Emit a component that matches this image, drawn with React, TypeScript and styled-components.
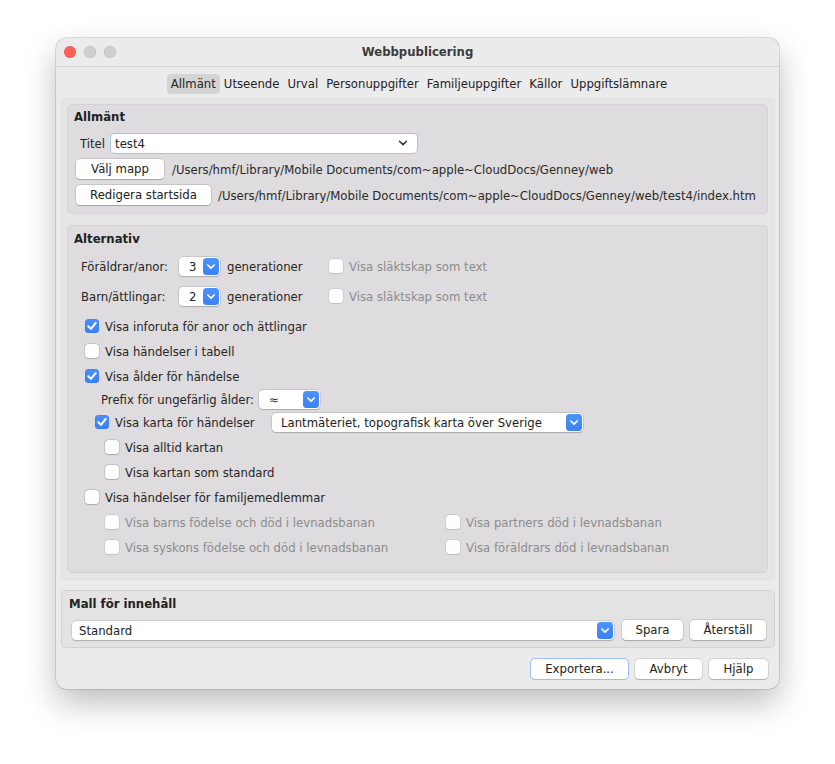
import React from 'react';
import styled, { createGlobalStyle } from 'styled-components';

const Global = createGlobalStyle`
  html, body { margin: 0; padding: 0; background: #ffffff; }
  body {
    font-family: "DejaVu Sans", "Liberation Sans", sans-serif;
    font-size: 11.7px;
    color: #262626;
  }
  * { box-sizing: border-box; }
`;

const Stage = styled.div`
  width: 835px;
  height: 764px;
  padding: 38px 0 0 56px;
`;

const Window = styled.div`
  width: 723px;
  height: 651px;
  background: #ecebec;
  border-radius: 10px;
  box-shadow: 0 0 0 0.5px rgba(0, 0, 0, 0.22), 0 14px 32px rgba(0, 0, 0, 0.26);
  display: flex;
  flex-direction: column;
  overflow: hidden;
`;

const TitleBar = styled.div`
  height: 29px;
  flex: none;
  border-bottom: 1px solid #d6d4d6;
  display: grid;
  grid-template-columns: 1fr auto 1fr;
  align-items: center;
  padding: 0 8px 1px 8px;
`;

const Lights = styled.div`
  display: flex;
  gap: 8px;
`;

const Light = styled.span<{ $c: string }>`
  width: 12px;
  height: 12px;
  border-radius: 50%;
  background: ${(p) => p.$c};
  box-shadow: inset 0 0 0 0.5px rgba(0, 0, 0, 0.12);
`;

const Title = styled.div`
  font-weight: bold;
  color: #3c3b3c;
`;

const TabBar = styled.div`
  margin-top: 7px;
  height: 20px;
  flex: none;
  display: flex;
  justify-content: center;
  gap: 0;
  padding-left: 3px;
`;

const Tab = styled.div<{ $active?: boolean }>`
  padding: 1px 4px 0 4px;
  line-height: 19px;
  border-radius: 4px;
  background: ${(p) => (p.$active ? '#d5d4d5' : 'transparent')};
  color: #232323;
`;

const Pane = styled.div`
  margin: 4px 4px 0 5px;
  padding: 6px 7px 7px 6px;
  background: #e6e5e6;
  border-radius: 5px;
  box-shadow: inset 0 0 0 0.5px rgba(0, 0, 0, 0.05);
`;

const Group = styled.div<{ $mt?: number; $pt?: number; $pb?: number; $bg?: string }>`
  margin-top: ${(p) => p.$mt ?? 0}px;
  padding: ${(p) => p.$pt ?? 5}px 6px ${(p) => p.$pb ?? 8}px 6px;
  background: ${(p) => p.$bg ?? '#dedcde'};
  border: 1px solid #d4d2d4;
  border-radius: 5px;
`;

const MallGroup = styled(Group)`
  margin: 10px 4px 0 5px;
  padding-left: 7px;
`;

const GroupTitle = styled.div`
  height: 14px;
  line-height: 14px;
  padding-top: 1px;
  font-weight: bold;
  color: #222;
`;

const Row = styled.div<{ $mt?: number; $indent?: number }>`
  display: flex;
  align-items: center;
  height: 20px;
  margin-top: ${(p) => p.$mt ?? 5}px;
  padding-left: ${(p) => p.$indent ?? 0}px;
  white-space: nowrap;
`;

const Label = styled.span<{ $w?: number; $gap?: number; $ml?: number; $muted?: boolean }>`
  flex: none;
  padding-top: 1px;
  width: ${(p) => (p.$w ? `${p.$w}px` : 'auto')};
  margin-right: ${(p) => p.$gap ?? 0}px;
  margin-left: ${(p) => p.$ml ?? 0}px;
  color: ${(p) => (p.$muted ? '#8d8c8d' : '#262626')};
`;

const PathText = styled.span<{ $gap: number }>`
  margin-left: ${(p) => p.$gap}px;
  padding-top: 1px;
  color: #2a2a2a;
`;

const Button = styled.div<{ $w: number; $ml?: number; $default?: boolean }>`
  flex: none;
  width: ${(p) => p.$w}px;
  margin-left: ${(p) => p.$ml ?? 0}px;
  height: 20px;
  padding-top: 1px;
  line-height: 19px;
  text-align: center;
  background: #ffffff;
  border-radius: 4px;
  color: #222;
  box-shadow: ${(p) =>
    p.$default
      ? '0 0 0 1px #9dbdf0, 0 0.5px 1px rgba(0,0,0,0.15)'
      : '0 0 0 0.5px rgba(0,0,0,0.18), 0 0.5px 1px rgba(0,0,0,0.18)'};
`;

const Combo = styled.div<{ $w: number; $pl: number; $focus?: boolean }>`
  flex: none;
  width: ${(p) => p.$w}px;
  height: 19px;
  display: flex;
  align-items: center;
  justify-content: space-between;
  padding-left: ${(p) => p.$pl}px;
  padding-right: 1px;
  background: #ffffff;
  border-radius: 4px;
  box-shadow: ${(p) =>
    p.$focus
      ? '0 0 0 1px #a4c3f2'
      : '0 0 0 0.5px rgba(0,0,0,0.16), 0 0.5px 1px rgba(0,0,0,0.16)'};
  color: #222;
`;

const ComboText = styled.span`
  padding-top: 1px;
`;

const ChevronBox = styled.span`
  width: 16px;
  height: 17px;
  border-radius: 3.5px;
  background: linear-gradient(#4d93fb, #3a82f5);
  display: inline-flex;
  align-items: center;
  justify-content: center;
  flex: none;
`;

const PlainChevron = styled.span`
  width: 16px;
  height: 17px;
  display: inline-flex;
  align-items: center;
  justify-content: center;
  margin-right: 5px;
`;

const Box = styled.span<{ $checked?: boolean; $disabled?: boolean }>`
  width: 14px;
  height: 14px;
  flex: none;
  border-radius: 3.5px;
  display: inline-flex;
  align-items: center;
  justify-content: center;
  background: ${(p) => (p.$checked ? 'linear-gradient(#4a90fa, #3a80f4)' : '#ffffff')};
  box-shadow: ${(p) =>
    p.$checked
      ? 'inset 0 0 0 0.5px rgba(0,0,0,0.08)'
      : p.$disabled
      ? '0 0 0 0.5px rgba(0,0,0,0.12), 0 0.5px 1px rgba(0,0,0,0.08)'
      : '0 0 0 0.5px rgba(0,0,0,0.2), 0 0.5px 1px rgba(0,0,0,0.14)'};
`;

const CheckText = styled.span<{ $disabled?: boolean }>`
  margin-left: 6px;
  padding-top: 1px;
  color: ${(p) => (p.$disabled ? '#8d8c8d' : '#262626')};
`;

const CheckWrap = styled.span<{ $w?: number }>`
  display: inline-flex;
  align-items: center;
  flex: none;
  width: ${(p) => (p.$w ? `${p.$w}px` : 'auto')};
`;

const TwoCol = styled.div`
  display: grid;
  grid-template-columns: 341px auto;
`;

const MallRow = styled.div`
  display: flex;
  align-items: center;
  height: 20px;
  margin-top: 10px;
  padding-left: 3px;
`;

const Footer = styled.div`
  margin-top: 11px;
  display: flex;
  justify-content: flex-end;
  gap: 7px;
  padding-right: 11px;
`;

const Chevron = () => (
  <ChevronBox>
    <svg width="16" height="17" viewBox="0 0 16 17">
      <polyline points="4.8,7 8,10.2 11.2,7" fill="none" stroke="#fff" strokeWidth="1.7" strokeLinecap="round" strokeLinejoin="round" />
    </svg>
  </ChevronBox>
);

const Check: React.FC<{ checked?: boolean; disabled?: boolean; label: string; w?: number }> = ({ checked, disabled, label, w }) => (
  <CheckWrap $w={w}>
    <Box $checked={checked} $disabled={disabled}>
      {checked && (
        <svg width="14" height="14" viewBox="0 0 14 14">
          <polyline points="3.3,7.3 5.9,9.9 10.7,4" fill="none" stroke="#fff" strokeWidth="2" strokeLinecap="round" strokeLinejoin="round" />
        </svg>
      )}
    </Box>
    <CheckText $disabled={disabled}>{label}</CheckText>
  </CheckWrap>
);

const tabs = ['Allmänt', 'Utseende', 'Urval', 'Personuppgifter', 'Familjeuppgifter', 'Källor', 'Uppgiftslämnare'];

export default function App() {
  return (
    <>
      <Global />
      <Stage>
        <Window>
          <TitleBar>
            <Lights>
              <Light $c="#fe5f57" />
              <Light $c="#d0ced0" />
              <Light $c="#d0ced0" />
            </Lights>
            <Title>Webbpublicering</Title>
            <span />
          </TitleBar>

          <TabBar>
            {tabs.map((t, i) => (
              <Tab key={t} $active={i === 0}>
                {t}
              </Tab>
            ))}
          </TabBar>

          <Pane>
            <Group $pt={4} $pb={8}>
              <GroupTitle>Allmänt</GroupTitle>
              <Row $mt={10} $indent={6}>
                <Label $gap={6}>Titel</Label>
                <Combo $w={306} $pl={4} $focus>
                  <ComboText>test4</ComboText>
                  <PlainChevron>
                    <svg width="10" height="6" viewBox="0 0 10 6">
                      <polyline points="1.5,1.2 5,4.6 8.5,1.2" fill="none" stroke="#333" strokeWidth="1.5" strokeLinecap="round" strokeLinejoin="round" />
                    </svg>
                  </PlainChevron>
                </Combo>
              </Row>
              <Row $mt={6} $indent={2}>
                <Button $w={88}>Välj mapp</Button>
                <PathText $gap={8}>/Users/hmf/Library/Mobile Documents/com~apple~CloudDocs/Genney/web</PathText>
              </Row>
              <Row $mt={6} $indent={2}>
                <Button $w={135}>Redigera startsida</Button>
                <PathText $gap={7}>/Users/hmf/Library/Mobile Documents/com~apple~CloudDocs/Genney/web/test4/index.htm</PathText>
              </Row>
            </Group>

            <Group $mt={11} $pt={5} $pb={15}>
              <GroupTitle>Alternativ</GroupTitle>
              <Row $mt={11} $indent={7}>
                <Label $w={98}>Föräldrar/anor:</Label>
                <Combo $w={41} $pl={10}>
                  <ComboText>3</ComboText>
                  <Chevron />
                </Combo>
                <Label $w={102} $ml={7}>generationer</Label>
                <Check disabled label="Visa släktskap som text" />
              </Row>
              <Row $mt={10} $indent={7}>
                <Label $w={98}>Barn/ättlingar:</Label>
                <Combo $w={41} $pl={10}>
                  <ComboText>2</ComboText>
                  <Chevron />
                </Combo>
                <Label $w={102} $ml={7}>generationer</Label>
                <Check disabled label="Visa släktskap som text" />
              </Row>
              <Row $mt={10} $indent={11}>
                <Check checked label="Visa inforuta för anor och ättlingar" />
              </Row>
              <Row $indent={11}>
                <Check label="Visa händelser i tabell" />
              </Row>
              <Row $indent={11}>
                <Check checked label="Visa ålder för händelse" />
              </Row>
              <Row $mt={3} $indent={27}>
                <Label $w={158}>Prefix för ungefärlig ålder:</Label>
                <Combo $w={61} $pl={10}>
                  <ComboText>≈</ComboText>
                  <Chevron />
                </Combo>
              </Row>
              <Row $mt={3} $indent={21}>
                <Check checked label="Visa karta för händelser" w={177} />
                <Combo $w={311} $pl={9}>
                  <ComboText>Lantmäteriet, topografisk karta över Sverige</ComboText>
                  <Chevron />
                </Combo>
              </Row>
              <Row $indent={31}>
                <Check label="Visa alltid kartan" />
              </Row>
              <Row $indent={31}>
                <Check label="Visa kartan som standard" />
              </Row>
              <Row $indent={11}>
                <Check label="Visa händelser för familjemedlemmar" />
              </Row>
              <Row $indent={31}>
                <TwoCol>
                  <Check disabled label="Visa barns födelse och död i levnadsbanan" />
                  <Check disabled label="Visa partners död i levnadsbanan" />
                </TwoCol>
              </Row>
              <Row $indent={31}>
                <TwoCol>
                  <Check disabled label="Visa syskons födelse och död i levnadsbanan" />
                  <Check disabled label="Visa föräldrars död i levnadsbanan" />
                </TwoCol>
              </Row>
            </Group>
          </Pane>

          <MallGroup $pt={5} $pb={7} $bg="#e4e3e4">
            <GroupTitle>Mall för innehåll</GroupTitle>
            <MallRow>
              <Combo $w={542} $pl={7}>
                <ComboText>Standard</ComboText>
                <Chevron />
              </Combo>
              <Button $w={61} $ml={8}>Spara</Button>
              <Button $w={76} $ml={7}>Återställ</Button>
            </MallRow>
          </MallGroup>

          <Footer>
            <Button $w={97} $default>Exportera...</Button>
            <Button $w={67}>Avbryt</Button>
            <Button $w={59}>Hjälp</Button>
          </Footer>
        </Window>
      </Stage>
    </>
  );
}
